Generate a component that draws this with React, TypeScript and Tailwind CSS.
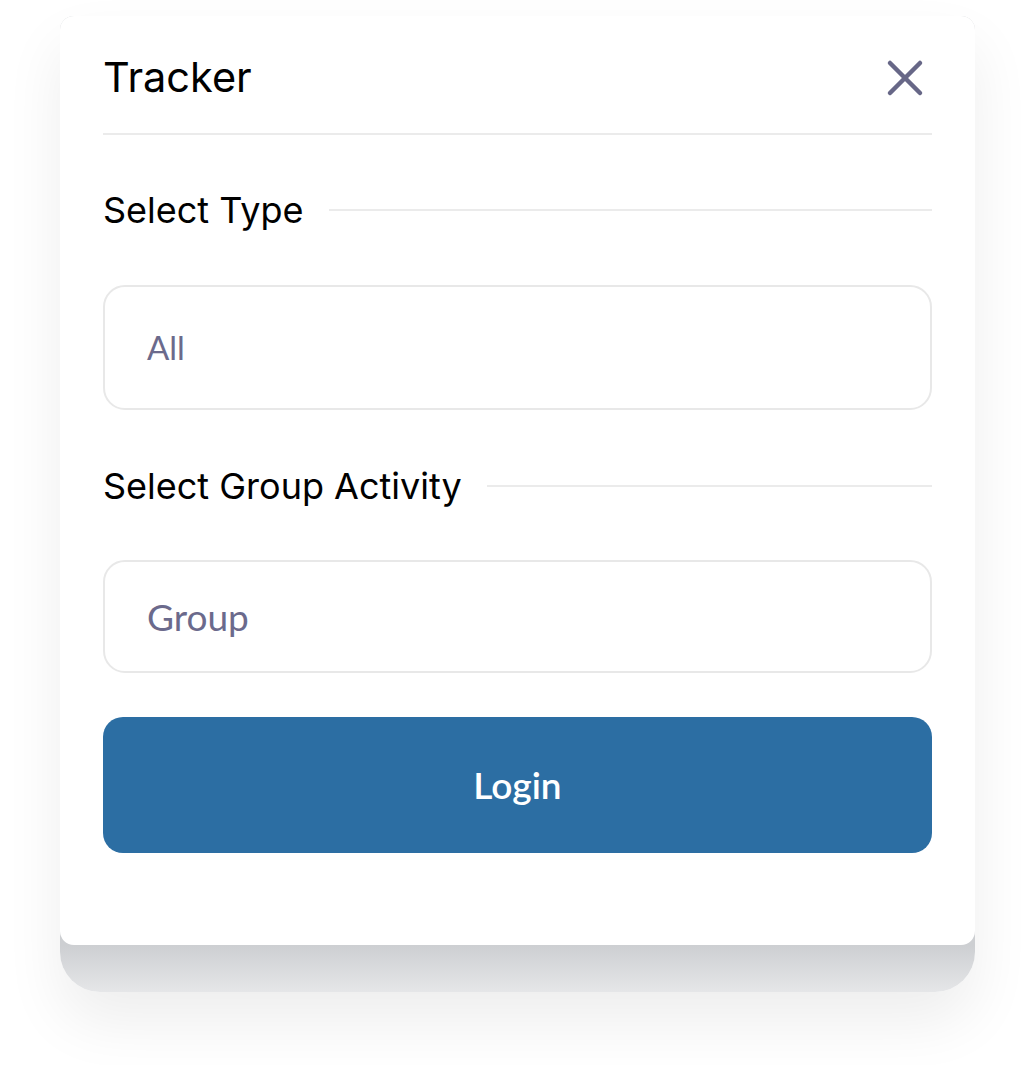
import { X } from "lucide-react";

function SectionLabel({ text }: { text: string }) {
  return (
    <div className="flex h-[40px] items-center gap-[25px]">
      <span className="text-[36px] leading-none text-black whitespace-nowrap [font-family:Inter,'Liberation_Sans',sans-serif]">
        {text}
      </span>
      <div className="h-[2px] flex-1 bg-[#ebebeb]" />
    </div>
  );
}

export default function App() {
  return (
    <div className="min-h-screen w-full bg-white px-[60px] pt-[16px]">
      {/* grey base layer peeking out under the card */}
      <div className="rounded-t-[14px] rounded-b-[40px] bg-[linear-gradient(180deg,#cdcfd2_0%,#cdcfd2_calc(100%-47px),#e5e6e8_100%)] pb-[47px] shadow-[0_30px_60px_rgba(0,0,0,0.07)]">
        <div className="rounded-[14px] bg-white px-[43px] pt-[22px] pb-[92px]">
          <div className="flex h-[80px] items-center justify-between">
            <h1 className="text-[41.5px] leading-none text-black [font-family:Inter,'Liberation_Sans',sans-serif]">
              Tracker
            </h1>
            <button className="-mr-[3px] text-[#676787]">
              <X size={60} strokeWidth={1.8} />
            </button>
          </div>
          <div className="mt-[15px] h-[2px] bg-[#ebebeb]" />

          <div className="mt-[55px]">
            <SectionLabel text="Select Type" />
          </div>
          <div className="mt-[55px] flex h-[125px] items-center rounded-[22px] border-2 border-[#e8e8e8] px-[42px]">
            <span className="text-[33px] leading-none text-[#6b6a8c] [font-family:Lato,'Open_Sans',sans-serif]">All</span>
          </div>

          <div className="mt-[56px]">
            <SectionLabel text="Select Group Activity" />
          </div>
          <div className="mt-[54px] flex h-[113px] items-center rounded-[22px] border-2 border-[#e8e8e8] px-[42px]">
            <span className="text-[37px] leading-none text-[#6b6a8c] [font-family:Lato,'Open_Sans',sans-serif]">Group</span>
          </div>

          <button className="mt-[44px] flex h-[136px] w-full items-center justify-center rounded-[20px] bg-[#2c6ea3] text-[37px] font-semibold text-white [font-family:Lato,'Open_Sans',sans-serif]">
            Login
          </button>
        </div>
      </div>
    </div>
  );
}
